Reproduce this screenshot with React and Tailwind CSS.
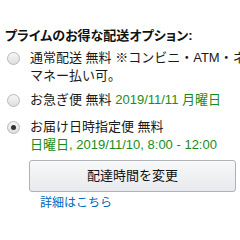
import React from "react";

function Radio({ checked }) {
  return (
    <span className="relative mt-[3px] flex h-[13px] w-[13px] shrink-0 items-center justify-center rounded-full border border-[#b8b8b8] bg-gradient-to-b from-[#f6f6f6] to-[#dedede]">
      {checked && <span className="h-[5px] w-[5px] rounded-full bg-[#333]" />}
    </span>
  );
}

export default function App() {
  return (
    <div
      className="h-[240px] w-[240px] overflow-hidden bg-white text-[13px] leading-[18px] text-[#1a1a1a]"
      style={{ fontFamily: '"Liberation Sans", "Noto Sans CJK JP", sans-serif' }}
    >
      <div className="pl-[5px] pt-[27px]">
        <div className="whitespace-nowrap font-bold text-[#111] [font-feature-settings:'palt']">
          プライムのお得な配送オプション:
        </div>
        <div className="mt-[4px] flex flex-col gap-[6px] pl-[2px]">
          <div className="flex gap-[10px]">
            <Radio />
            <div className="whitespace-nowrap">
              <div>通常配送 無料 ※コンビニ・ATM・ネ</div>
              <div>マネー払い可。</div>
            </div>
          </div>
          <div className="flex gap-[10px]">
            <Radio />
            <div className="whitespace-nowrap">
              お急ぎ便 無料 <span className="text-[#1a8c1a]">2019/11/11 月曜日</span>
            </div>
          </div>
          <div className="mt-[3px] flex gap-[10px]">
            <Radio checked />
            <div className="whitespace-nowrap">
              <div>お届け日時指定便 無料</div>
              <div className="text-[#1a8c1a]">日曜日, 2019/11/10, 8:00 - 12:00</div>
            </div>
          </div>
        </div>
        <div className="mt-[6px] pl-[24px]">
          <button className="flex h-[32px] w-[207px] items-center justify-center rounded-[3px] border border-[#adb1b8] bg-gradient-to-b from-[#f7f8fa] to-[#e7e9ec] text-[13px] text-[#111] shadow-[0_1px_0_rgba(255,255,255,0.6)_inset]">
            配達時間を変更
          </button>
          <div className="mt-[3px] pl-[11px] text-[12px] leading-[16px] text-[#0066c0]">
            詳細はこちら
          </div>
        </div>
      </div>
    </div>
  );
}
